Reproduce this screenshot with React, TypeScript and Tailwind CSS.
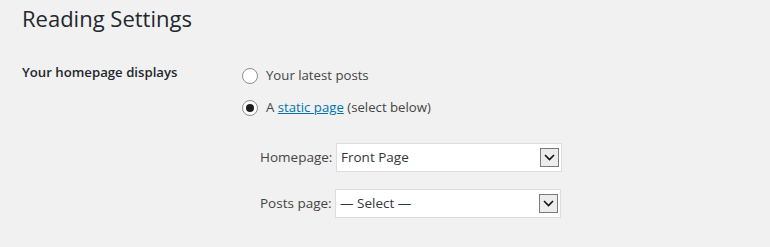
import React from "react";

const font = { fontFamily: '"Open Sans", "Noto Sans", "Liberation Sans", sans-serif' };

function Radio({ checked }: { checked?: boolean }) {
  return (
    <span className="flex h-4 w-4 shrink-0 items-center justify-center rounded-full border border-[#8c8f94] bg-white">
      {checked && <span className="h-2 w-2 rounded-full bg-[#1e1e1e]" />}
    </span>
  );
}

function Select({ value }: { value: string }) {
  return (
    <div className="flex h-[29px] w-[226px] items-center justify-between border border-[#dddddd] bg-white pl-[4px] pr-[2px]">
      <span className="text-[13.5px] text-[#32373c]">{value}</span>
      <span className="flex h-[19px] w-[19px] items-center justify-center border border-[#7a7a7a] bg-[#ececec]">
        <svg width="11" height="7" viewBox="0 0 11 7">
          <path d="M1 1 L5.5 5.5 L10 1" fill="none" stroke="#111" strokeWidth="1.6" />
        </svg>
      </span>
    </div>
  );
}

export default function App() {
  return (
    <div className="h-[247px] w-full bg-[#f1f1f1] pl-[22px] pt-[3px]" style={font}>
      <h1 className="text-[22px] font-normal leading-[30px] text-[#23282d]">Reading Settings</h1>
      <div className="mt-[28px] flex">
        <div className="w-[220px] pt-[2px] text-[13.2px] font-semibold leading-[18px] text-[#23282d]">
          Your homepage displays
        </div>
        <div className="flex flex-col">
          <label className="mt-[6px] flex h-[18px] items-center gap-[8px] text-[13.2px] text-[#444444]">
            <Radio />
            <span>Your latest posts</span>
          </label>
          <label className="mt-[14px] flex h-[18px] items-center gap-[8px] text-[13.2px] text-[#444444]">
            <Radio checked />
            <span>
              A <span className="text-[#0073aa] underline">static page</span> (select below)
            </span>
          </label>
          <div className="mt-[26px] ml-[18px] flex flex-col gap-[17px]">
            <div className="flex items-center">
              <span className="w-[76px] text-[13.5px] text-[#444444]">Homepage:</span>
              <Select value="Front Page" />
            </div>
            <div className="flex items-center">
              <span className="w-[75px] text-[13.5px] text-[#444444]">Posts page:</span>
              <Select value="— Select —" />
            </div>
          </div>
        </div>
      </div>
    </div>
  );
}
